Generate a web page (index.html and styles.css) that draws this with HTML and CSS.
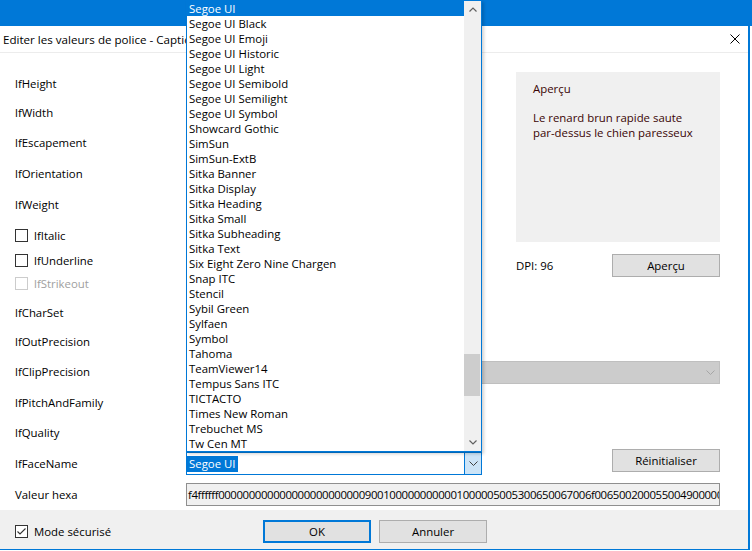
FILE: index.html
```html
<!DOCTYPE html>
<html lang="fr">
<head>
<meta charset="utf-8">
<title>Editer les valeurs de police</title>
<link rel="stylesheet" href="styles.css">
</head>
<body>
<div class="screen">
  <div class="topbar"></div>
  <div class="dialog">
    <div class="titlebar">
      <span class="title">Editer les valeurs de police - Caption</span>
      <svg class="close" width="10" height="10" viewBox="0 0 10 10"><path d="M0.5 0.5 L9.5 9.5 M9.5 0.5 L0.5 9.5" stroke="#000" stroke-width="1" fill="none"/></svg>
    </div>
    <div class="form">
      <div class="lbl">lfHeight</div>
      <div class="lbl">lfWidth</div>
      <div class="lbl">lfEscapement</div>
      <div class="lbl">lfOrientation</div>
      <div class="lbl">lfWeight</div>
      <div class="lbl chk"><span class="box"></span>lfItalic</div>
      <div class="lbl chk"><span class="box"></span>lfUnderline</div>
      <div class="lbl chk disabled"><span class="box"></span>lfStrikeout</div>
      <div class="lbl">lfCharSet</div>
      <div class="lbl">lfOutPrecision</div>
      <div class="lbl">lfClipPrecision</div>
      <div class="lbl">lfPitchAndFamily</div>
      <div class="lbl">lfQuality</div>
      <div class="lbl">lfFaceName</div>
      <div class="lbl">Valeur hexa</div>

      <div class="preview-panel">
        <div class="preview">
          <div class="preview-title">Aperçu</div>
          <div class="preview-text">Le renard brun rapide saute<br>par-dessus le chien paresseux</div>
        </div>
        <div class="dpi-row">
          <span>DPI: 96</span>
          <button class="btn">Aperçu</button>
        </div>
      </div>

      <div class="combo-disabled">
        <svg class="chev" width="9" height="5" viewBox="0 0 9 5"><path d="M0.5 0.5 L4.5 4.5 L8.5 0.5" stroke="#a6a6a6" fill="none"/></svg>
      </div>

      <div class="combo-face">
        <div class="combo-text"><span class="sel">Segoe UI</span></div>
        <div class="combo-btn"><svg width="9" height="5" viewBox="0 0 9 5"><path d="M0.5 0.5 L4.5 4.5 L8.5 0.5" stroke="#404040" fill="none"/></svg></div>
      </div>

      <button class="btn btn-reset">Réinitialiser</button>

      <div class="hex">f4ffffff0000000000000000000000009001000000000001000005005300650067006f006500200055004900000000000000000000000000000000000000000000000000000000000000000000000000000000000000000</div>
    </div>
    <div class="footer">
      <label class="footer-check"><span class="box checked"><svg width="11" height="11" viewBox="0 0 11 11"><path d="M1.5 5.5 L4 8 L9.5 2.5" stroke="#333" stroke-width="1.1" fill="none"/></svg></span>Mode sécurisé</label>
      <button class="btn btn-default">OK</button>
      <button class="btn">Annuler</button>
    </div>
  </div>

  <div class="dropdown">
    <ul class="items">
      <li class="active">Segoe UI</li>
      <li>Segoe UI Black</li>
      <li>Segoe UI Emoji</li>
      <li>Segoe UI Historic</li>
      <li>Segoe UI Light</li>
      <li>Segoe UI Semibold</li>
      <li>Segoe UI Semilight</li>
      <li>Segoe UI Symbol</li>
      <li>Showcard Gothic</li>
      <li>SimSun</li>
      <li>SimSun-ExtB</li>
      <li>Sitka Banner</li>
      <li>Sitka Display</li>
      <li>Sitka Heading</li>
      <li>Sitka Small</li>
      <li>Sitka Subheading</li>
      <li>Sitka Text</li>
      <li>Six Eight Zero Nine Chargen</li>
      <li>Snap ITC</li>
      <li>Stencil</li>
      <li>Sybil Green</li>
      <li>Sylfaen</li>
      <li>Symbol</li>
      <li>Tahoma</li>
      <li>TeamViewer14</li>
      <li>Tempus Sans ITC</li>
      <li>TICTACTO</li>
      <li>Times New Roman</li>
      <li>Trebuchet MS</li>
      <li>Tw Cen MT</li>
    </ul>
    <div class="scrollbar">
      <div class="sb-btn"><svg width="8" height="5" viewBox="0 0 8 5"><path d="M0.5 4.5 L4 1 L7.5 4.5" stroke="#606060" stroke-width="1.2" fill="none"/></svg></div>
      <div class="sb-track"><div class="sb-thumb"></div></div>
      <div class="sb-btn"><svg width="8" height="5" viewBox="0 0 8 5"><path d="M0.5 0.5 L4 4 L7.5 0.5" stroke="#606060" stroke-width="1.2" fill="none"/></svg></div>
    </div>
  </div>
</div>
</body>
</html>
```

FILE: styles.css
```css
* { box-sizing: border-box; }

body {
  margin: 0;
  font-family: "Segoe UI", "Open Sans", "Noto Sans", sans-serif;
  font-size: 11.4px;
  color: #000;
  background: #fff;
}

.screen {
  position: relative;
  width: 752px;
  height: 551px;
  overflow: hidden;
  background: #fff;
}

.topbar {
  height: 26px;
  background: #0078d7;
}

.dialog {
  width: 750px;
  background: #fff;
  border-right: 2px solid #0078d7;
  border-bottom: 1px solid #0078d7;
}

.titlebar {
  height: 27px;
  display: flex;
  align-items: center;
  justify-content: space-between;
  padding: 0 8px 0 3px;
  border-bottom: 1px solid #ececec;
}

.title {
  font-size: 11.6px;
  width: 183px;
  overflow: hidden;
  white-space: nowrap;
}

.form {
  display: grid;
  grid-template-columns: 171px 330px 204px;
  grid-template-rows: 28px 30px 31px 30px 32px 31px 18px 29px 29px 29px 31px 30px 31px 31px 30px;
  padding: 16px 0 1px 15px;
}

.lbl {
  grid-column: 1;
  display: flex;
  align-items: center;
  white-space: nowrap;
}

.chk { gap: 6px; }

.box {
  width: 13px;
  height: 13px;
  border: 1px solid #333;
  background: #fff;
  display: flex;
  align-items: center;
  justify-content: center;
  flex: none;
}

.disabled { color: #a0a0a0; }
.disabled .box { border-color: #cccccc; }

.preview-panel {
  grid-column: 3;
  grid-row: 1 / 9;
  display: flex;
  flex-direction: column;
  padding-top: 3px;
}

.preview {
  height: 170px;
  background: #f0f0f0;
  padding: 9px 0 0 17px;
  color: #3a0505;
  line-height: 15px;
}

.preview-text { margin-top: 14px; }

.dpi-row {
  margin-top: 12px;
  height: 23px;
  display: flex;
  align-items: center;
  justify-content: space-between;
}

.btn {
  width: 108px;
  height: 23px;
  border: 1px solid #adadad;
  background: #e1e1e1;
  font: inherit;
  color: #000;
  padding: 0;
}

.btn-default { border: 2px solid #0078d7; }

.btn-reset {
  grid-column: 3;
  grid-row: 14;
  justify-self: end;
  align-self: start;
  margin-top: 1px;
}

.combo-disabled {
  grid-column: 2 / 4;
  grid-row: 11;
  align-self: start;
  margin-top: 5px;
  height: 23px;
  background: #cccccc;
  border: 1px solid #bfbfbf;
  display: flex;
  align-items: center;
  justify-content: flex-end;
  padding-right: 4px;
}

.combo-face {
  grid-column: 2;
  grid-row: 14;
  align-self: start;
  margin-top: 4px;
  width: 296px;
  height: 23px;
  border: 1px solid #0078d7;
  display: flex;
}

.combo-text {
  flex: 1;
  display: flex;
  align-items: center;
}

.sel {
  background: #0078d7;
  color: #fff;
  line-height: 16px;
  padding: 0 2px;
}

.combo-btn {
  width: 17px;
  background: #cce4f7;
  border-left: 1px solid #0078d7;
  display: flex;
  align-items: center;
  justify-content: center;
}

.hex {
  grid-column: 2 / 4;
  grid-row: 15;
  align-self: start;
  margin-top: 4px;
  height: 23px;
  border: 1px solid #8f8f8f;
  background: #f0f0f0;
  padding-left: 1px;
  line-height: 21px;
  white-space: nowrap;
  overflow: hidden;
  letter-spacing: -0.4px;
}

.footer {
  height: 39px;
  background: #f0f0f0;
  display: flex;
  align-items: center;
  gap: 8px;
  padding: 4px 0 0 15px;
}

.footer-check {
  width: 240px;
  display: flex;
  align-items: center;
  gap: 6px;
}

.dropdown {
  position: absolute;
  left: 186px;
  top: 0;
  width: 296px;
  height: 452px;
  border: 1px solid #0078d7;
  background: #fff;
  display: flex;
  box-shadow: 2px 2px 3px rgba(0, 0, 0, 0.18);
}

.items {
  flex: 1;
  list-style: none;
  margin: 0;
  padding: 0;
}

.items li {
  height: 15px;
  line-height: 15px;
  padding-left: 2px;
  white-space: nowrap;
}

.items li.active {
  background: #0078d7;
  color: #fff;
}

.scrollbar {
  width: 17px;
  background: #f0f0f0;
  display: flex;
  flex-direction: column;
}

.sb-btn {
  height: 17px;
  display: flex;
  align-items: center;
  justify-content: center;
}

.sb-track {
  flex: 1;
  padding-top: 336px;
}

.sb-thumb {
  width: 16px;
  height: 42px;
  background: #cdcdcd;
}
```
